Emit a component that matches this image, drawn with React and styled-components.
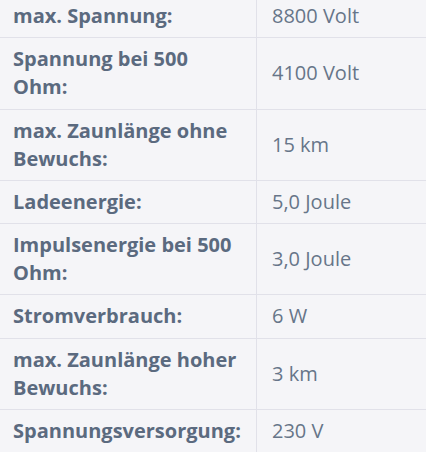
import React from "react";
import styled, { createGlobalStyle } from "styled-components";

const GlobalStyle = createGlobalStyle`
  html, body {
    margin: 0;
    padding: 0;
    background: #f5f5f8;
    overflow: hidden;
  }
  body {
    font-family: "Open Sans", "Noto Sans", sans-serif;
  }
`;

const SpecTable = styled.table`
  width: 100%;
  margin-top: -5px;
  border-collapse: collapse;
  background: #f5f5f8;
  font-size: 20px;
  line-height: 28px;
`;

const Row = styled.tr`
  border-bottom: 1px solid #e1e1e9;
`;

const Label = styled.th`
  width: 229px;
  padding: 7px 14px 7.3px 13px;
  text-align: left;
  vertical-align: top;
  font-weight: 700;
  color: #5b6a7f;
  border-right: 1px solid #e1e1e9;
`;

const Value = styled.td`
  padding: 7px 14px 7.3px 15px;
  vertical-align: middle;
  font-weight: 400;
  color: #677589;
`;

const specs = [
  ["max. Spannung:", "8800 Volt"],
  ["Spannung bei 500 Ohm:", "4100 Volt"],
  ["max. Zaunlänge ohne Bewuchs:", "15 km"],
  ["Ladeenergie:", "5,0 Joule"],
  ["Impulsenergie bei 500 Ohm:", "3,0 Joule"],
  ["Stromverbrauch:", "6 W"],
  ["max. Zaunlänge hoher Bewuchs:", "3 km"],
  ["Spannungsversorgung:", "230 V"],
];

const App = () => {
  return (
    <>
      <GlobalStyle />
      <SpecTable>
        <tbody>
          {specs.map(([label, value]) => (
            <Row key={label}>
              <Label>{label}</Label>
              <Value>{value}</Value>
            </Row>
          ))}
        </tbody>
      </SpecTable>
    </>
  );
};

export default App;
